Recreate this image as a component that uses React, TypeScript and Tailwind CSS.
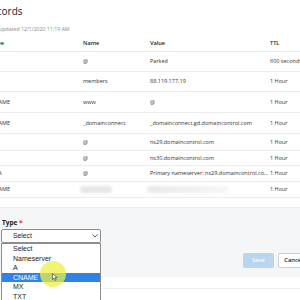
import React from 'react';

type DnsRow = { type: string; name: string; value: string; ttl: string; h: string; blurred?: boolean };

const rows: DnsRow[] = [
  { type: 'A', name: '@', value: 'Parked', ttl: '600 seconds', h: 'h-[20px]' },
  { type: 'A', name: 'members', value: '88.119.177.19', ttl: '1 Hour', h: 'h-[20px]' },
  { type: 'CNAME', name: 'www', value: '@', ttl: '1 Hour', h: 'h-[21px]' },
  { type: 'CNAME', name: '_domainconnect', value: '_domainconnect.gd.domaincontrol.com', ttl: '1 Hour', h: 'h-[21px]' },
  { type: 'NS', name: '@', value: 'ns29.domaincontrol.com', ttl: '1 Hour', h: 'h-[17px]' },
  { type: 'NS', name: '@', value: 'ns30.domaincontrol.com', ttl: '1 Hour', h: 'h-[15px]' },
  { type: 'SOA', name: '@', value: 'Primary nameserver: ns29.domaincontrol.co...', ttl: '1 Hour', h: 'h-[16px]' },
  { type: 'CNAME', name: '', value: '', ttl: '1 Hour', h: 'h-[16px]', blurred: true },
];

const options = ['Select', 'Nameserver', 'A', 'CNAME', 'MX', 'TXT', 'SRV'];

export default function App() {
  return (
    <div className="relative w-[300px] h-[300px] overflow-hidden bg-white font-['Open_Sans',sans-serif] text-[#1b1b1b]">
      <h1 className="-ml-[15px] pt-[3px] h-[22px] text-[10px] leading-[16px] font-medium whitespace-nowrap">Records</h1>
      <div className="-ml-[12px] h-[14px] text-[5.2px] leading-[14px] text-[#8a8a8a] whitespace-nowrap">Last updated 12/1/2020 11:19 AM</div>

      <div className="-ml-[9px] w-[340px]">
        <div className="grid grid-cols-[92px_67px_120px_1fr] h-[16px] items-center border-b border-[#ececec] text-[5.6px] font-semibold">
          <span>Type</span>
          <span>Name</span>
          <span>Value</span>
          <span>TTL</span>
        </div>
        {rows.map((r, i) => (
          <div key={i} className={`grid grid-cols-[92px_67px_120px_1fr] items-center border-b border-[#ececec] text-[5.5px] text-[#333] ${r.h}`}>
            <span>{r.type}</span>
            {r.blurred ? (
              <span className="block -ml-[3px] w-[32px] h-[7px] rounded-full bg-[#e6e6e6] blur-[1.5px]" />
            ) : (
              <span>{r.name}</span>
            )}
            {r.blurred ? (
              <span className="block -ml-[3px] w-[82px] h-[7px] rounded-full bg-gradient-to-r from-[#e8e8e8] to-[#f6f6f6] blur-[1.5px]" />
            ) : (
              <span className="whitespace-nowrap">{r.value}</span>
            )}
            <span className="whitespace-nowrap">{r.ttl}</span>
          </div>
        ))}
      </div>

      <div className="mt-[9px] h-[70px] bg-[#f5f6f7] border-t border-[#ededed] pl-[1px] pt-[11px] flex flex-col">
        <label className="pl-[1px] h-[10px] text-[6.5px] leading-[8px] font-bold text-[#222]">
          Type <span className="text-[#d9363e]">*</span>
        </label>
        <div className="flex items-end">
          <div className="w-[100px] h-[14px] border border-[#8d8d8d] rounded-[2px] bg-white flex items-center justify-between pl-[11px] pr-[2px] font-['Liberation_Sans',sans-serif] text-[6.8px] text-[#222]">
            <span>Select</span>
            <svg width="6" height="4" viewBox="0 0 6 4"><path d="M0.5 0.5 L3 3 L5.5 0.5" fill="none" stroke="#555" strokeWidth="0.9" /></svg>
          </div>
        </div>
        <div className="flex justify-end gap-[4px] mt-[10px]">
          <button className="w-[31px] h-[15px] rounded-[2px] bg-[#b9d5ef] text-white text-[5.5px] font-semibold">Save</button>
          <button className="w-[31px] h-[15px] -mr-[9px] rounded-[2px] bg-white border border-[#cfcfcf] text-[5.8px] font-semibold text-[#222]">Cancel</button>
        </div>
      </div>
      <div className="mt-[11px] border-t border-[#efefef]" />

      <div className="absolute left-[1px] top-[243px] w-[100px] bg-white border border-[#8d8d8d] font-['Liberation_Sans',sans-serif] text-[7px] text-[#222]">
        {options.map((o) => (
          <div key={o} className={`h-[9.5px] leading-[9.5px] pl-[11px] ${o === 'CNAME' ? 'bg-[#2f83e6] text-white' : ''}`}>{o}</div>
        ))}
      </div>

      <div className="absolute left-[40px] top-[261px] w-[26px] h-[26px] rounded-full bg-[#eeee44]/75" />
      <svg className="absolute left-[52px] top-[273px]" width="6" height="8" viewBox="0 0 6 8">
        <path d="M0.5 0.5 L0.5 6.5 L2 5 L3.2 7.5 L4.2 7 L3 4.6 L5.2 4.6 Z" fill="#fff" stroke="#333" strokeWidth="0.6" />
      </svg>
    </div>
  );
}
